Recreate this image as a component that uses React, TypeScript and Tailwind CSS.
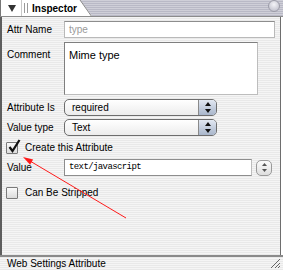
import React from "react"

const pin = "bg-[image:repeating-linear-gradient(0deg,#e9e9e9_0px,#e9e9e9_1px,#f5f5f5_1px,#f5f5f5_2px)]"

const Label = ({ text, className = "" }: { text: string; className?: string }) => (
  <div className={`w-[62px] shrink-0 pl-[5px] text-black ${className}`}>{text}</div>
)

const UpDown = () => (
  <svg width="6" height="11" viewBox="0 0 6 11">
    <path d="M3 0 L6 4 L0 4 Z" fill="#111" />
    <path d="M0 7 L6 7 L3 11 Z" fill="#111" />
  </svg>
)

const Select = ({ value }: { value: string }) => (
  <div className="flex h-[17px] w-[153px] items-stretch overflow-hidden rounded-[5px] border border-[#6d6d6d] bg-[linear-gradient(#ffffff,#ececec)]">
    <div className="flex flex-1 items-center pl-[7px] leading-none">{value}</div>
    <div className="flex w-[18px] items-center justify-center border-l border-[#8a8a8a] bg-[linear-gradient(#e2e8f2,#a9b6cb)]">
      <UpDown />
    </div>
  </div>
)

const Check = ({ checked, text }: { checked?: boolean; text: string }) => (
  <div className="flex items-center pl-[4px]">
    <div className="relative h-[12px] w-[12px] rounded-[1px] border border-[#7a7a7a] bg-[linear-gradient(#fafafa,#dcdcdc)]">
      {checked && (
        <svg className="absolute left-[1px] top-[-4px]" width="13" height="14" viewBox="0 0 13 14">
          <path d="M1.5 8 L4.5 12 L11.5 1" stroke="#111" strokeWidth="2.2" fill="none" />
        </svg>
      )}
    </div>
    <span className="ml-[7px]">{text}</span>
  </div>
)

export default function App() {
  return (
    <div className="relative h-[270px] w-[283px] overflow-hidden bg-white font-['Liberation_Sans',Arial,sans-serif] text-[10px] text-black">
      {/* title strip */}
      <div className="relative flex h-[17px] border-b border-[#8c8c8c] bg-[image:repeating-linear-gradient(0deg,#b9b9c6_0px,#b9b9c6_1px,#cfcfd8_1px,#cfcfd8_2px)]">
        <div className="flex h-full w-[92px] items-center border-l border-[#777] bg-white [clip-path:polygon(0_0,80px_0,92px_100%,0_100%)]">
          <svg className="ml-[7px]" width="8" height="7" viewBox="0 0 8 7">
            <path d="M0 0 L8 0 L4 7 Z" fill="#333" />
          </svg>
          <div className="ml-[5px] h-full w-px bg-[#c8c8c8]" />
          <div className="ml-[2px] h-[10px] w-px bg-[#9a9a9a]" />
          <div className="ml-[2px] h-[10px] w-px bg-[#9a9a9a]" />
          <span className="ml-[4px] font-bold">Inspector</span>
        </div>
        <svg className="absolute left-[79px] top-0" width="14" height="17" viewBox="0 0 14 17">
          <path d="M1 0 L13 17" stroke="#8a8a8a" strokeWidth="1" />
        </svg>
        <div className="absolute right-[3px] top-0 h-[12px] w-[12px] rounded-full border border-[#9c9ca8] bg-[radial-gradient(circle_at_50%_35%,#f4f4f8,#b7b7c4)]" />
      </div>

      {/* body */}
      <div className={`mr-[2px] flex h-[238px] flex-col border-r border-l-2 border-l-[#5e5e5e] border-r-[#6e6e6e] ${pin}`}>
        <div className="mt-[4px] flex items-center">
          <Label text="Attr Name" />
          <div className="flex h-[17px] w-[211px] items-center border border-[#b9b9b9] border-t-[#8d8d8d] bg-white pl-[4px] text-[#9a9a9a]">
            type
          </div>
        </div>

        <div className="mt-[4px] flex items-start">
          <Label text="Comment" className="pt-[5px]" />
          <div className="h-[53px] w-[194px] border border-[#7f7f7f] border-r-[#bdbdbd] border-b-[#bdbdbd] bg-white pl-[4px] pt-[4px] text-[11px]">
            Mime type
          </div>
        </div>

        <div className="mt-[4px] flex items-center">
          <Label text="Attribute Is" />
          <Select value="required" />
        </div>

        <div className="mt-[3px] flex items-center">
          <Label text="Value type" />
          <Select value="Text" />
        </div>

        <div className="mt-[4px]">
          <Check checked text="Create this Attribute" />
        </div>

        <div className="mt-[4px] flex items-center">
          <Label text="Value" />
          <div className="flex h-[17px] w-[188px] items-center border border-[#8d8d8d] border-r-[#bdbdbd] bg-white pl-[4px] font-['Liberation_Mono',monospace] text-[9px] tracking-[-0.6px]">
            text/javascript
          </div>
          <div className="ml-[4px] flex h-[16px] w-[16px] items-center justify-center rounded-[5px] border border-[#9a9a9a] bg-[linear-gradient(#fbfbfb,#dedede)]">
            <svg width="5" height="9" viewBox="0 0 5 9">
              <path d="M2.5 0 L5 3 L0 3 Z" fill="#555" />
              <path d="M0 6 L5 6 L2.5 9 Z" fill="#555" />
            </svg>
          </div>
        </div>

        <div className="mt-[9px]">
          <Check text="Can Be Stripped" />
        </div>
      </div>

      {/* status bar */}
      <div className={`relative flex h-[15px] items-center border-t-2 border-[#8a8a8a] pl-[7px] ${pin}`}>
        Web Settings Attribute
        <svg className="absolute bottom-[1px] right-[2px]" width="11" height="11" viewBox="0 0 11 11">
          <path d="M10 1 L1 10 M10 5 L5 10 M10 8 L8 10" stroke="#666" strokeWidth="1" />
        </svg>
      </div>

      {/* red annotation arrow */}
      <svg className="pointer-events-none absolute left-0 top-0" width="283" height="270" viewBox="0 0 283 270">
        <line x1="126" y1="218" x2="30" y2="161" stroke="#ff1a1a" strokeWidth="1" />
        <path d="M23 157 L33.1 159.5 L30.1 164.7 Z" fill="#ff1a1a" />
      </svg>
    </div>
  )
}
